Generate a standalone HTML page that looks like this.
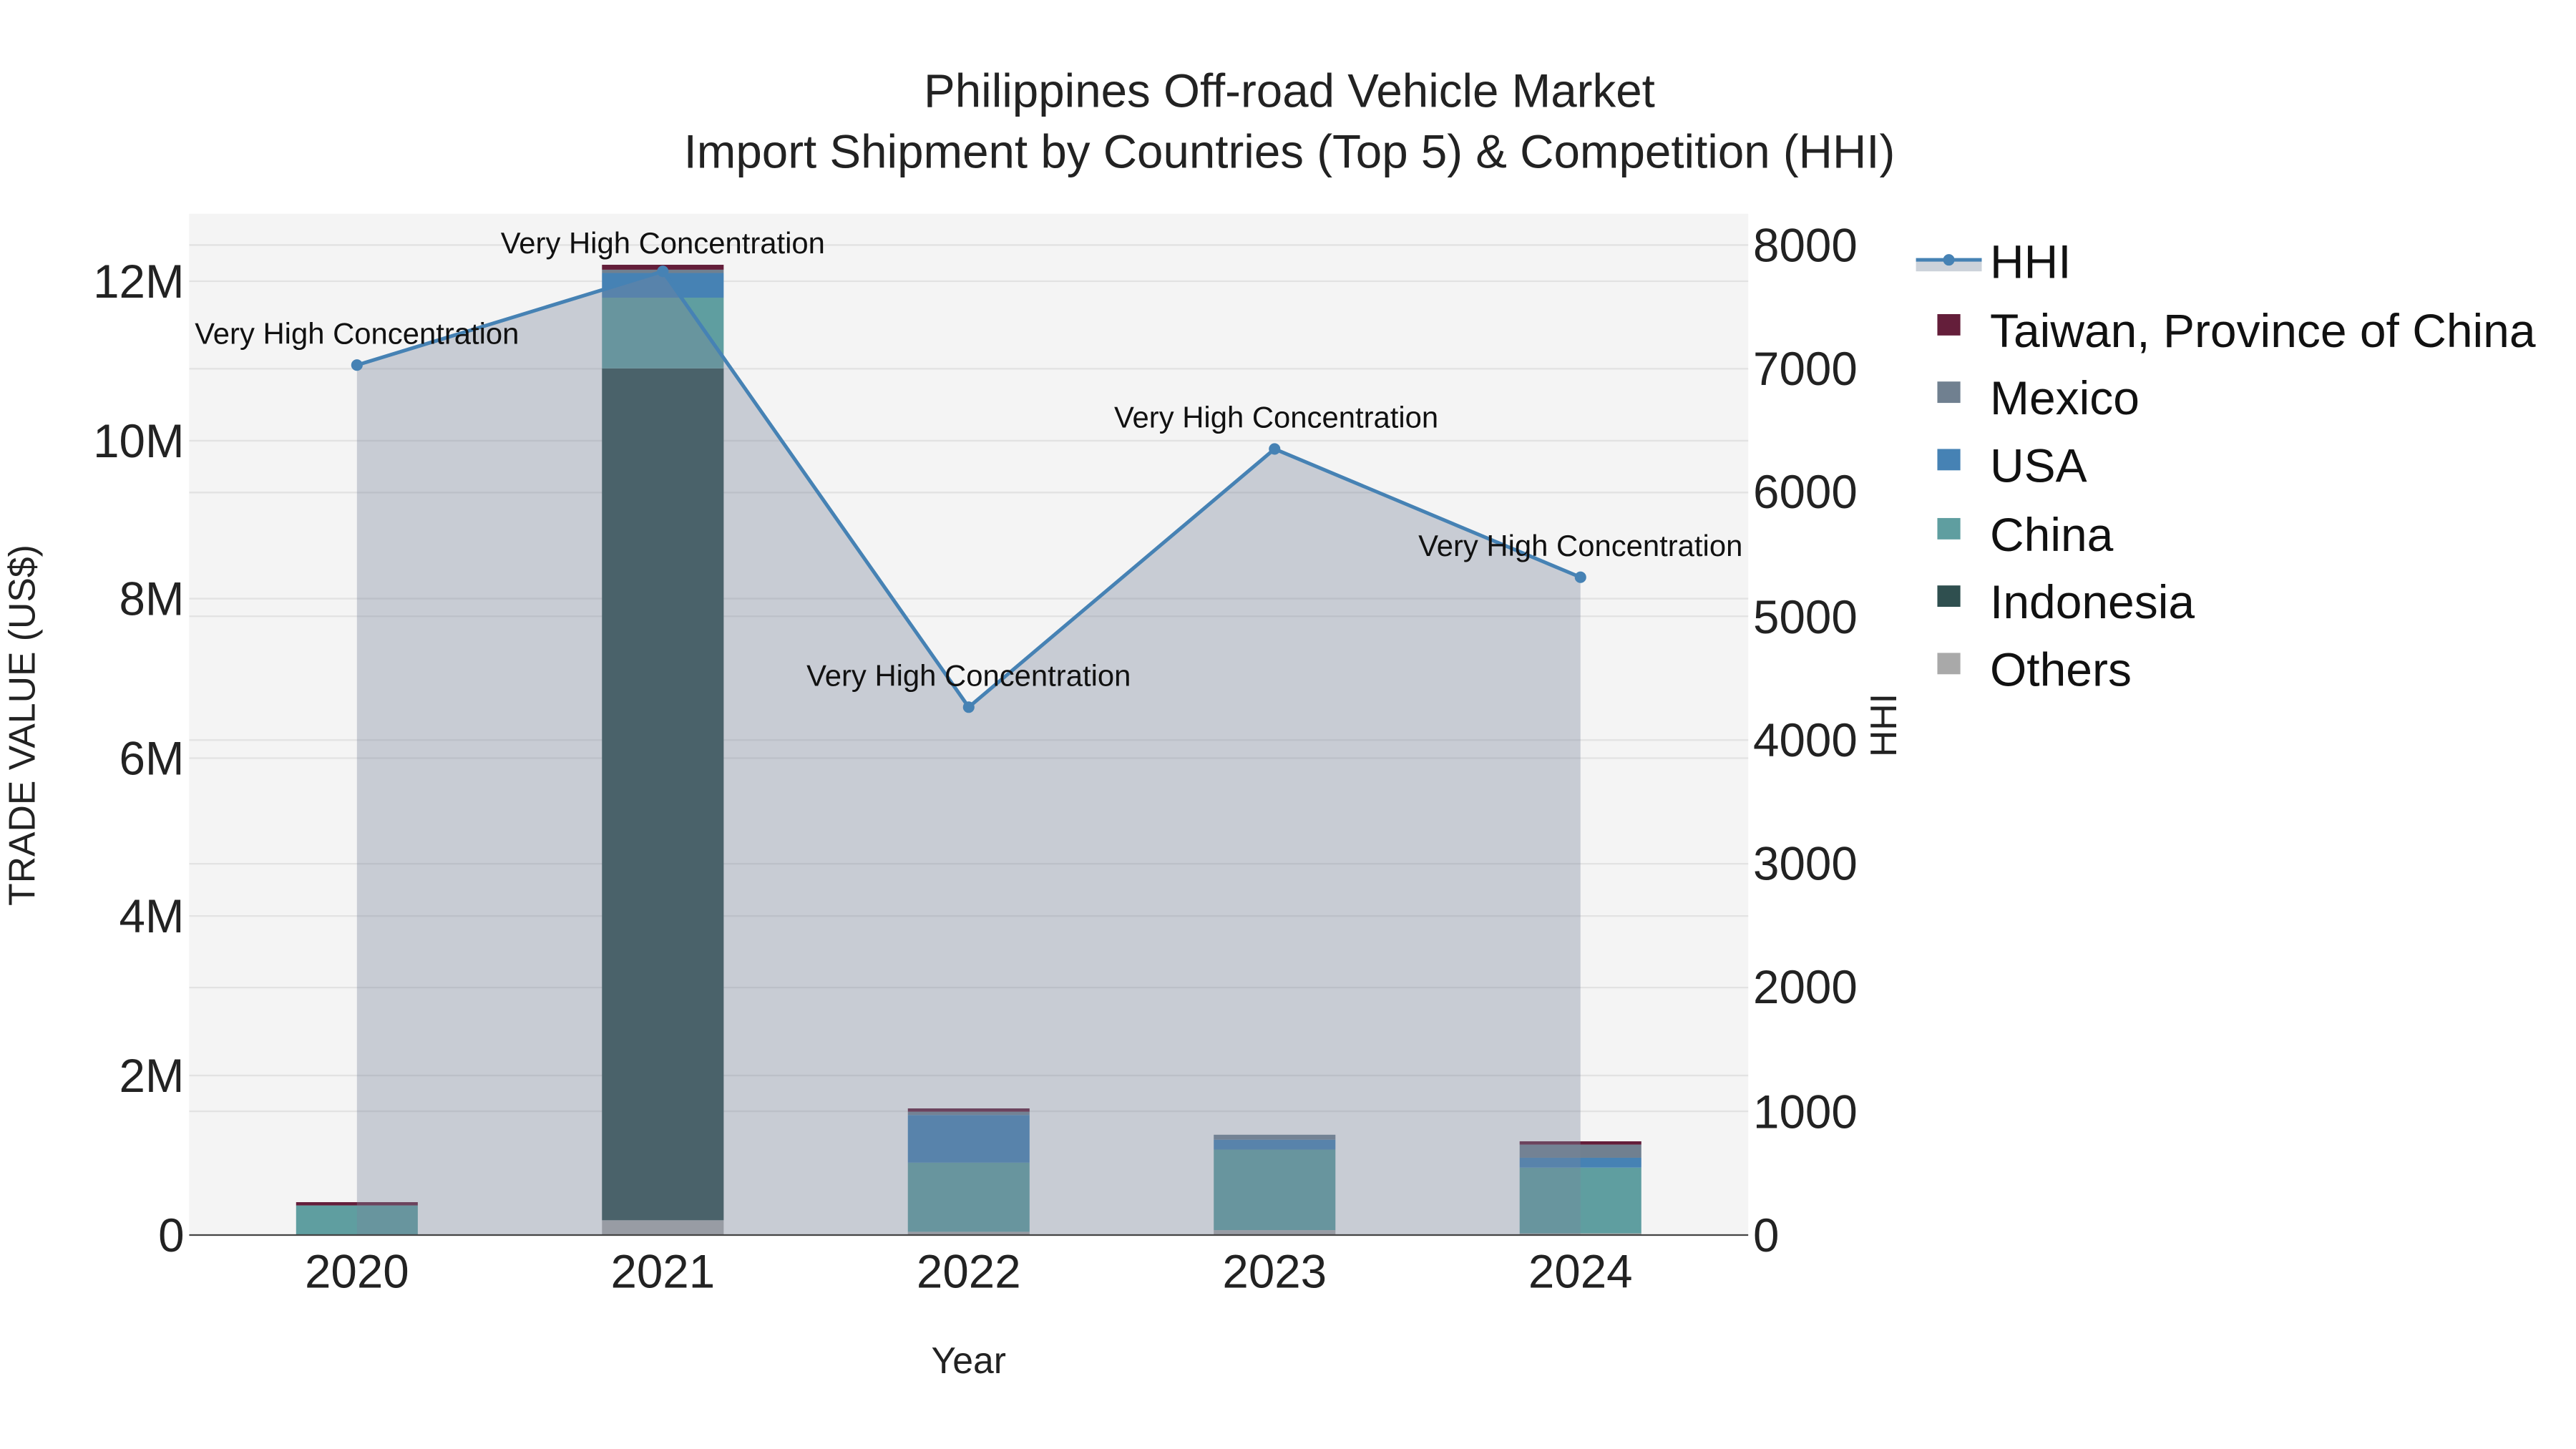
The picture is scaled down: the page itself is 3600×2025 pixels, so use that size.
<!DOCTYPE html>
<html><head><meta charset="utf-8"><style>html,body{margin:0;padding:0;background:#fff}svg{display:block}</style></head>
<body>
<svg width="3600" height="2025" viewBox="0 0 1566.3 881.1" xmlns="http://www.w3.org/2000/svg" font-family="Liberation Sans, Arial, sans-serif">
<rect x="0" y="0" width="1567" height="882" fill="#fff"/>
<rect x="115" y="130" width="948" height="621" fill="#f4f4f4"/>
<g stroke="#e2e2e2" stroke-width="1">
<line x1="115" x2="1063" y1="654" y2="654"/><line x1="115" x2="1063" y1="557" y2="557"/><line x1="115" x2="1063" y1="461" y2="461"/><line x1="115" x2="1063" y1="364" y2="364"/><line x1="115" x2="1063" y1="268" y2="268"/><line x1="115" x2="1063" y1="171" y2="171"/>
<line x1="115" x2="1063" y1="675.75" y2="675.75"/><line x1="115" x2="1063" y1="600.5" y2="600.5"/><line x1="115" x2="1063" y1="525.25" y2="525.25"/><line x1="115" x2="1063" y1="450" y2="450"/><line x1="115" x2="1063" y1="374.75" y2="374.75"/><line x1="115" x2="1063" y1="299.5" y2="299.5"/><line x1="115" x2="1063" y1="224.25" y2="224.25"/><line x1="115" x2="1063" y1="149" y2="149"/>
</g>
<rect x="180" y="733" width="74" height="18" fill="#5f9ea0"/><rect x="180" y="731" width="74" height="2" fill="#641e3a"/>
<rect x="366" y="742" width="74" height="9" fill="#a9a9a9"/>
<rect x="366" y="224" width="74" height="518" fill="#2f4f4f"/>
<rect x="366" y="181" width="74" height="43" fill="#5f9ea0"/>
<rect x="366" y="166" width="74" height="15" fill="#4682b4"/>
<rect x="366" y="164" width="74" height="2" fill="#708090"/>
<rect x="366" y="161" width="74" height="3" fill="#641e3a"/>
<rect x="552" y="749" width="74" height="2" fill="#a9a9a9"/>
<rect x="552" y="707" width="74" height="42" fill="#5f9ea0"/>
<rect x="552" y="678" width="74" height="29" fill="#4682b4"/>
<rect x="552" y="676" width="74" height="2" fill="#708090"/>
<rect x="552" y="674" width="74" height="2" fill="#641e3a"/>
<rect x="738" y="748" width="74" height="3" fill="#a9a9a9"/>
<rect x="738" y="699" width="74" height="49" fill="#5f9ea0"/>
<rect x="738" y="693" width="74" height="6" fill="#4682b4"/>
<rect x="738" y="690" width="74" height="3" fill="#708090"/>
<rect x="924" y="750" width="74" height="1" fill="#a9a9a9"/>
<rect x="924" y="710" width="74" height="40" fill="#5f9ea0"/>
<rect x="924" y="704" width="74" height="6" fill="#4682b4"/>
<rect x="924" y="696" width="74" height="8" fill="#708090"/>
<rect x="924" y="694" width="74" height="2" fill="#641e3a"/>
<path d="M217,222 L403,165 L589,430 L775,273 L961,351 L961,751 L217,751 Z" fill="rgba(122,133,155,0.36)"/>
<line x1="115" x2="1063" y1="751" y2="751" stroke="#444" stroke-width="1"/>
<polyline points="217,222 403,165 589,430 775,273 961,351" fill="none" stroke="#4682b4" stroke-width="2.2"/>
<g fill="#4682b4"><circle cx="217" cy="222" r="3.5"/><circle cx="403" cy="165" r="3.5"/><circle cx="589" cy="430" r="3.5"/><circle cx="775" cy="273" r="3.5"/><circle cx="961" cy="351" r="3.5"/></g>
<g font-size="18.2" fill="#111" text-anchor="middle">
<text x="217" y="209">Very High Concentration</text>
<text x="403" y="154">Very High Concentration</text>
<text x="589" y="417">Very High Concentration</text>
<text x="776" y="260">Very High Concentration</text>
<text x="961" y="338">Very High Concentration</text>
</g>
<g font-size="28.5" fill="#222" text-anchor="end">
<text x="112" y="761">0</text><text x="112" y="664">2M</text><text x="112" y="567">4M</text><text x="112" y="471">6M</text><text x="112" y="374">8M</text><text x="112" y="278">10M</text><text x="112" y="181">12M</text>
</g>
<g font-size="28.5" fill="#222" text-anchor="start">
<text x="1066" y="761">0</text><text x="1066" y="686">1000</text><text x="1066" y="610">2000</text><text x="1066" y="535">3000</text><text x="1066" y="460">4000</text><text x="1066" y="385">5000</text><text x="1066" y="309">6000</text><text x="1066" y="234">7000</text><text x="1066" y="159">8000</text>
</g>
<g font-size="28.5" fill="#222" text-anchor="middle">
<text x="217" y="783">2020</text><text x="403" y="783">2021</text><text x="589" y="783">2022</text><text x="775" y="783">2023</text><text x="961" y="783">2024</text>
</g>
<text x="589" y="835" font-size="22.5" fill="#222" text-anchor="middle">Year</text>
<text transform="translate(21,441) rotate(-90)" font-size="22.5" fill="#222" text-anchor="middle">TRADE VALUE (US$)</text>
<text transform="translate(1153,441) rotate(-90)" font-size="22.5" fill="#222" text-anchor="middle">HHI</text>
<g font-size="28.5" fill="#222" text-anchor="middle">
<text x="784" y="65">Philippines Off-road Vehicle Market</text>
<text x="784" y="102">Import Shipment by Countries (Top 5) &amp; Competition (HHI)</text>
</g>
<rect x="1165" y="159" width="40" height="6" fill="#ccd2da"/>
<line x1="1165" x2="1205" y1="158" y2="158" stroke="#4682b4" stroke-width="2.2"/>
<circle cx="1185" cy="158" r="3.5" fill="#4682b4"/>
<rect x="1178" y="191" width="14" height="13" fill="#641e3a"/>
<rect x="1178" y="232" width="14" height="13" fill="#708090"/>
<rect x="1178" y="273" width="14" height="13" fill="#4682b4"/>
<rect x="1178" y="315" width="14" height="13" fill="#5f9ea0"/>
<rect x="1178" y="356" width="14" height="13" fill="#2f4f4f"/>
<rect x="1178" y="397" width="14" height="13" fill="#a9a9a9"/>
<g font-size="28.7" fill="#111">
<text x="1210" y="169">HHI</text>
<text x="1210" y="211">Taiwan, Province of China</text>
<text x="1210" y="252">Mexico</text>
<text x="1210" y="293">USA</text>
<text x="1210" y="335">China</text>
<text x="1210" y="376">Indonesia</text>
<text x="1210" y="417">Others</text>
</g>
</svg>
</body></html>
